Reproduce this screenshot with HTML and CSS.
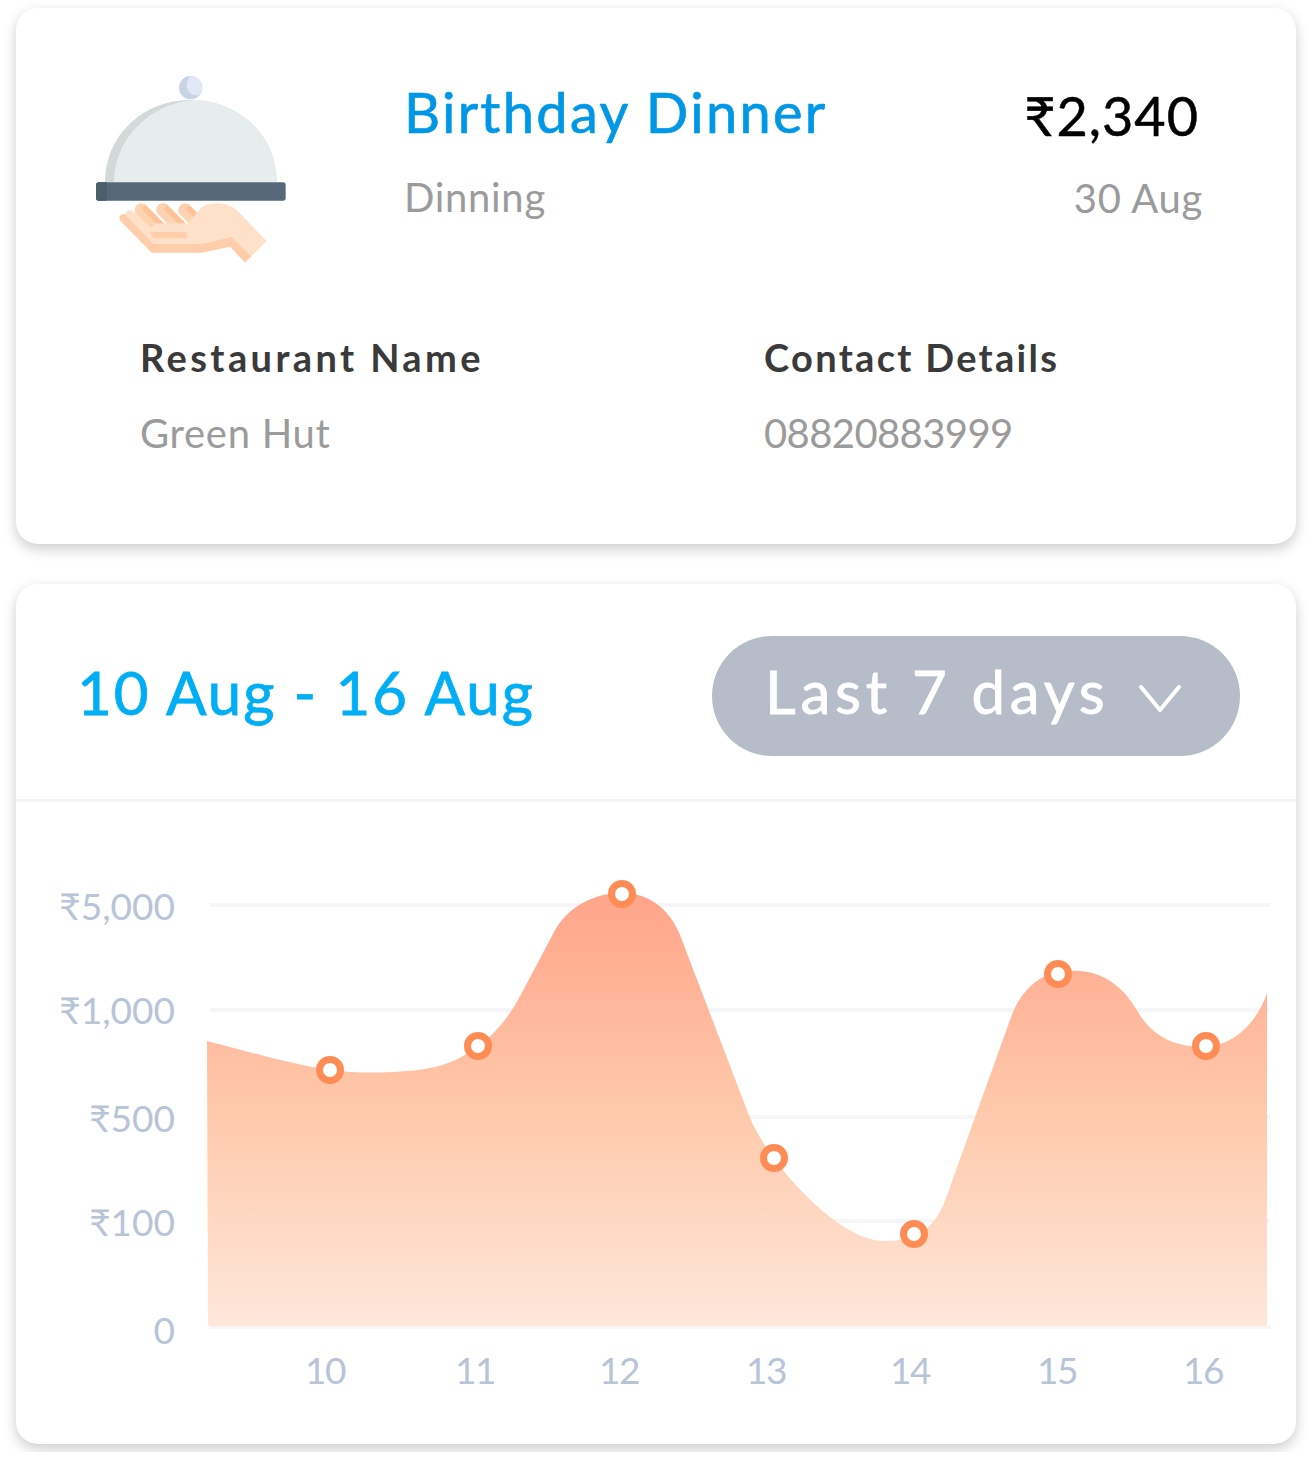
FILE: index.html
```html
<!DOCTYPE html>
<html lang="en">
<head>
<meta charset="UTF-8">
<title>Birthday Dinner</title>
<link rel="stylesheet" href="styles.css">
</head>
<body>
<div class="card info-card">
    <div class="top-row">
        <svg class="dish-icon" viewBox="0 0 660 660" width="220" height="220">
            <circle cx="332" cy="83" r="35" fill="#c9d2e6"/>
            <path d="M332 48A35 35 0 0 1 361 102C335 118 302 82 332 48Z" fill="#e2e8f6"/>
            <path d="M75 367C75 225 190 120 332 120C475 120 590 225 590 367Z" fill="#d3d8d8"/>
            <path d="M102 367C102 232 215 128 345 120C480 125 590 230 590 367Z" fill="#e7ecec"/>
            <rect x="48" y="367" width="569" height="55" rx="8" fill="#55697a"/>
            <path d="M56 367H80V422H56A8 8 0 0 1 48 414V375A8 8 0 0 1 56 367Z" fill="#4c5d6b"/>
            <path d="M184 450L240 506M249 449L300 500M315 450L345 480" stroke="#ffd2b0" stroke-width="40" stroke-linecap="round"/>
            <path d="M196 446L252 502M261 446L312 497M327 446L350 470" stroke="#ffc196" stroke-width="16" stroke-linecap="round"/>
            <path d="M121 482L215 578H365L450 560L495 608L515 588L455 530L365 552H222L135 463C125 458 112 470 121 482Z" fill="#ffcdaa"/>
            <path d="M226 490H325L365 442C395 422 445 428 472 452L560 543L515 588L455 530L365 552H222L135 463C140 448 152 448 160 455L215 503Z" fill="#ffe0c8"/>
            <path d="M212 516H320V535H228C218 535 212 526 212 516Z" fill="#ffcdaa"/>
        </svg>
        <div class="title-block">
            <h1 class="title">Birthday Dinner</h1>
            <div class="muted">Dinning</div>
        </div>
        <div class="amount-block">
            <div class="amount">₹2,340</div>
            <div class="muted">30 Aug</div>
        </div>
    </div>
    <div class="details">
        <div>
            <h2 class="label label-wide">Restaurant Name</h2>
            <div class="muted">Green Hut</div>
        </div>
        <div>
            <h2 class="label">Contact Details</h2>
            <div class="muted phone">08820883999</div>
        </div>
    </div>
</div>

<div class="card chart-card">
    <div class="chart-head">
        <div class="range">10 Aug - 16 Aug</div>
        <div class="pill">
            <span class="pill-text">Last 7 days</span>
            <svg class="chevron" viewBox="0 0 44 30" width="44" height="30">
                <path d="M3 4L22 27L41 4" fill="none" stroke="#fff" stroke-width="4" stroke-linecap="round" stroke-linejoin="round"/>
            </svg>
        </div>
    </div>
    <svg class="chart" viewBox="16 802 1280 642" width="1280" height="642">
        <defs>
            <linearGradient id="areaFill" x1="0" y1="0" x2="0" y2="1">
                <stop offset="0" stop-color="#ffa084"/>
                <stop offset="0.5" stop-color="#ffc6a7"/>
                <stop offset="1" stop-color="#fee6d8"/>
            </linearGradient>
        </defs>
        <g class="grid">
            <path d="M210 905H1270"/>
            <path d="M210 1010H1270"/>
            <path d="M210 1117H1270"/>
            <path d="M210 1221H1270"/>
            <path d="M210 1327H1270"/>
        </g>
        <path class="area" fill="url(#areaFill)" d="M207 1041C250 1052 290 1064 330 1070C360 1074 400 1073 425 1069C450 1065 465 1056 478 1046C495 1034 508 1018 518 1000L553 934C565 910 590 893 622 893C650 893 670 910 680 935L745 1105C752 1125 762 1143 774 1158C800 1195 850 1242 885 1241C900 1241 915 1238 925 1230C935 1222 942 1210 946 1198L1010 1020C1020 990 1040 975 1058 972C1085 968 1115 972 1138 1012C1155 1040 1180 1048 1206 1046C1235 1046 1258 1020 1267 993V1326H208Z"/>
        <g class="axis-y">
            <text x="175" y="920">₹5,000</text>
            <text x="175" y="1024">₹1,000</text>
            <text x="175" y="1132">₹500</text>
            <text x="175" y="1236">₹100</text>
            <text x="175" y="1344">0</text>
        </g>
        <g class="axis-x">
            <text x="325" y="1384">10</text>
            <text x="475" y="1384">11</text>
            <text x="619" y="1384">12</text>
            <text x="766" y="1384">13</text>
            <text x="910" y="1384">14</text>
            <text x="1057" y="1384">15</text>
            <text x="1203" y="1384">16</text>
        </g>
        <g class="dots">
            <circle cx="330" cy="1070" r="10.5"/>
            <circle cx="478" cy="1046" r="10.5"/>
            <circle cx="622" cy="894" r="10.5"/>
            <circle cx="774" cy="1158" r="10.5"/>
            <circle cx="914" cy="1234" r="10.5"/>
            <circle cx="1058" cy="974" r="10.5"/>
            <circle cx="1206" cy="1046" r="10.5"/>
        </g>
    </svg>
</div>
</body>
</html>
```

FILE: styles.css
```css
body {
    margin: 0;
    padding: 8px 16px;
    background: #fff;
    font-family: "Lato", "Noto Sans", "DejaVu Sans", sans-serif;
}
.card {
    background: #fff;
    border-radius: 22px;
    box-shadow: 0 5px 14px rgba(0, 0, 0, 0.2);
    overflow: hidden;
}
.info-card {
    height: 536px;
    box-sizing: border-box;
    padding: 52px 93px 0 64px;
}
.chart-card {
    margin-top: 40px;
    height: 860px;
}
.top-row {
    display: flex;
    align-items: flex-start;
}
.dish-icon {
    flex: none;
    margin-right: 104px;
}
.title {
    margin: 18px 0 0;
    font-size: 56px;
    line-height: 68px;
    font-weight: 400;
    -webkit-text-stroke: 0.7px #0098e6;
    color: #0098e6;
    letter-spacing: 2.3px;
}
.title-block {
    flex: 1;
}
.muted {
    font-size: 40px;
    line-height: 48px;
    color: #9b9b9b;
    letter-spacing: 0.7px;
}
.title-block .muted {
    margin-top: 27px;
}
.phone {
    letter-spacing: -0.6px;
}
.amount-block {
    text-align: right;
}
.amount {
    margin: 24px 4px 0 0;
    font-size: 54px;
    line-height: 64px;
    color: #000;
    letter-spacing: 1px;
    -webkit-text-stroke: 0.5px #000;
}
.amount-block .muted {
    margin-top: 26px;
}
.details {
    display: grid;
    grid-template-columns: 624px 1fr;
    margin: 53px 0 0 60px;
}
.label {
    margin: 0 0 28px;
    font-size: 38px;
    line-height: 48px;
    font-weight: 700;
    color: #3a3a3a;
    letter-spacing: 2.3px;
}
.label-wide {
    letter-spacing: 3.4px;
}
.chart-head {
    display: flex;
    align-items: center;
    justify-content: space-between;
    height: 218px;
    box-sizing: border-box;
    padding: 0 56px 0 61px;
    border-bottom: 3px solid #f3f4f7;
}
.range {
    font-size: 60px;
    font-weight: 400;
    color: #00aef5;
    letter-spacing: 2px;
    -webkit-text-stroke: 0.8px #00aef5;
}
.pill {
    display: flex;
    align-items: center;
    justify-content: space-between;
    box-sizing: border-box;
    width: 528px;
    height: 120px;
    margin-top: 8px;
    padding: 0 58px 0 53px;
    border-radius: 60px;
    background: #b7bcc9;
    color: #fff;
    font-size: 60px;
    font-weight: 400;
    letter-spacing: 4.7px;
    -webkit-text-stroke: 0.8px #fff;
}
.pill-text {
    margin-top: -9px;
}
.chevron {
    display: block;
    margin-top: 4px;
}
.chart {
    display: block;
    font-size: 37px;
}
.grid path {
    stroke: #f6f6f9;
    stroke-width: 4;
}
.area {
    opacity: 0.96;
}
.axis-y text {
    fill: #b8c4d8;
    text-anchor: end;
}
.axis-x text {
    fill: #b8c4d8;
    text-anchor: middle;
    letter-spacing: -1.5px;
}
.dots circle {
    fill: #fff;
    stroke: #ff8c55;
    stroke-width: 7;
}
```
